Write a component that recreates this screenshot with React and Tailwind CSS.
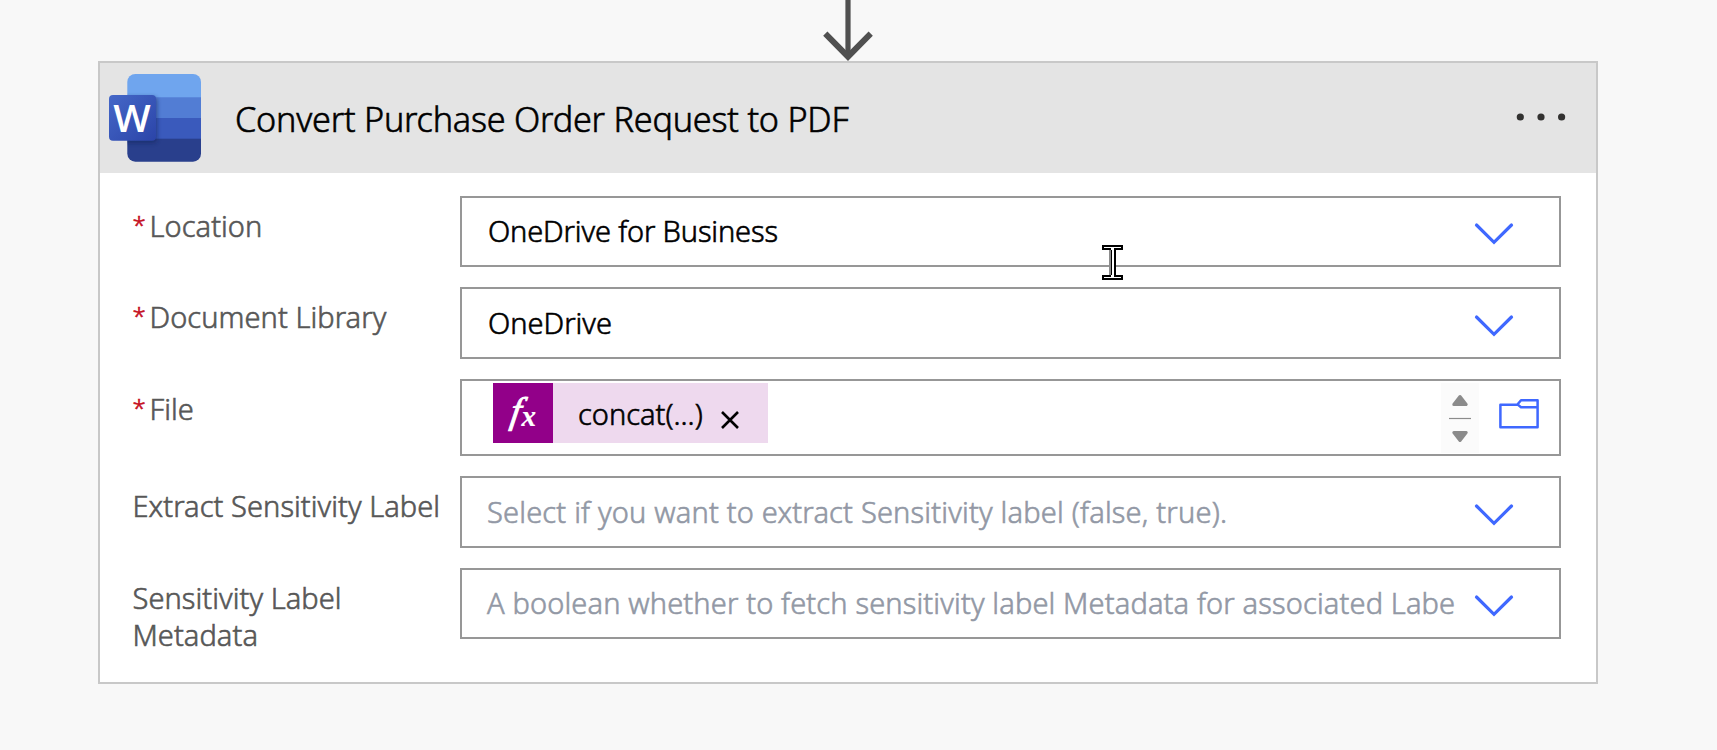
function Chevron() {
  return (
    <svg className="h-[24px] w-[40px] shrink-0" viewBox="0 0 40 24" fill="none" stroke="#3f68ff" strokeWidth="3.2" strokeLinecap="round">
      <path d="M2.500 3L20 20.300L37.500 3" />
    </svg>
  );
}

function FolderIcon() {
  return (
    <svg className="h-[30px] w-[40px] shrink-0" viewBox="0 0 40 30" fill="none" stroke="#3f68ff" strokeWidth="2.500" strokeLinejoin="round">
      <path d="M38.600 8.300V28.300H1.400V5.800H18.200L22 1.300H38.600V8.300H22L18.800 5.600" />
    </svg>
  );
}

function Scroller() {
  return (
    <svg className="h-[70px] w-[38px] shrink-0 bg-[#fbfbfb]" viewBox="0 0 38 70" fill="#8b8b8b" stroke="#8b8b8b" strokeWidth="3" strokeLinejoin="round">
      <path d="M19 13.500L25.200 21.500H12.800Z" />
      <path d="M8 35.500H30" strokeWidth="1.200" />
      <path d="M19 57.500L25.200 49.500H12.800Z" />
    </svg>
  );
}

function WordIcon() {
  return (
    <svg className="h-[92px] w-[96px] shrink-0" viewBox="0 0 96 92">
      <defs>
        <linearGradient id="wordTile" x1="0" y1="0" x2="1" y2="1">
          <stop offset="0" stopColor="#4568c8" />
          <stop offset="1" stopColor="#2b44a8" />
        </linearGradient>
        <clipPath id="wordPage"><rect x="21.300" y="2" width="73.700" height="87.700" rx="8" /></clipPath>
        <filter id="wordShadow" x="-20%" y="-20%" width="150%" height="150%"><feGaussianBlur stdDeviation="2" /></filter>
      </defs>
      <g clipPath="url(#wordPage)">
        <rect x="21" y="2" width="74" height="24" fill="#6fa5ee" />
        <rect x="21" y="25.300" width="74" height="21" fill="#527dd4" />
        <rect x="21" y="46" width="74" height="21" fill="#3a5abc" />
        <rect x="21" y="66.700" width="74" height="24" fill="#293f8c" />
        <rect x="4" y="25" width="47" height="46" rx="4" fill="#16265e" opacity="0.6" filter="url(#wordShadow)" />
      </g>
      <rect x="3" y="23" width="47" height="45.700" rx="4" fill="url(#wordTile)" />
      <text x="26" y="59.500" textAnchor="middle" textLength="37.500" lengthAdjust="spacingAndGlyphs" fill="#fff" className="font-['Open_Sans',sans-serif] text-[38px] font-semibold">W</text>
    </svg>
  );
}

function FxIcon() {
  return (
    <svg className="h-[60px] w-[60px] shrink-0 bg-[#920089] font-['Liberation_Serif',serif] italic" viewBox="0 0 60 60" fill="#fff" stroke="#fff">
      <text x="22.500" y="40" transform="skewX(-9)" strokeWidth="0.900" className="text-[37px]">f</text>
      <text x="28.500" y="42.500" strokeWidth="0.200" className="text-[29px] font-bold">x</text>
    </svg>
  );
}

function IBeam() {
  return (
    <svg className="absolute top-[244px] left-[1101px] h-[37px] w-[23px]" viewBox="0 0 23 37">
      <path d="M2 2H21V5H14V32H21V35H2V32H9V5H2Z" fill="#fff" stroke="#000" strokeWidth="2" />
      <path d="M9 6V31" stroke="#8c8c8c" strokeWidth="2" />
      <path d="M10.500 6V31" stroke="#000" strokeWidth="1" />
    </svg>
  );
}

function Row({ label, required, children }) {
  return (
    <div className="flex items-start">
      <div className="flex w-[328px] shrink-0 pt-[11px] leading-[37px] tracking-[0.06px] text-[#575757]">
        {required && <span className="w-[17px] shrink-0 pl-[0.5px] text-[24px] leading-[35px] text-[#c50f1f]">*</span>}
        <span className="pl-[0.5px] whitespace-nowrap">{label}</span>
      </div>
      {children}
    </div>
  );
}

function Select({ value, placeholder, textClass = "", height = "h-[71px]" }) {
  return (
    <div className={"flex w-[1101px] items-center border-2 border-[#979797] bg-white pr-[45px] " + height}>
      <span className={"w-[990px] shrink-0 whitespace-nowrap " + (value ? "pl-[26px] text-black " : "pl-[25px] text-[#9298a5] ") + textClass}>
        {value || placeholder}
      </span>
      <div className="ml-auto pt-[5px]"><Chevron /></div>
    </div>
  );
}

export default function App() {
  return (
    <div className="relative flex h-[750px] w-[1717px] flex-col overflow-hidden bg-[#f8f8f8] pl-[98px] font-['Noto_Sans',sans-serif] text-[29px] font-light [-webkit-text-stroke:0.6px]">
      <div className="flex h-[61px] w-[1500px] justify-center">
        <svg className="h-[61px] w-[52px]" viewBox="0 0 52 61" fill="none" stroke="#505050">
          <path d="M26 0V56" strokeWidth="5.200" />
          <path d="M3.300 33.700L26 56.700L48.700 33.700" strokeWidth="6" />
        </svg>
      </div>
      <div className="flex h-[623px] w-[1500px] flex-col border-2 border-[#c8c8c8] bg-white">
        <div className="flex h-[110px] shrink-0 items-center bg-[#e4e4e4] pr-[30px] pl-[6px]">
          <WordIcon />
          <h1 className="ml-[33px] pt-[2px] text-[34.2px] tracking-[-0.22px] whitespace-nowrap text-black">Convert Purchase Order Request to PDF</h1>
          <svg className="mb-[2px] ml-auto h-[8px] w-[50px]" viewBox="0 0 50 8" fill="#323130">
            <circle cx="4.300" cy="4" r="3.600" /><circle cx="25" cy="4" r="3.600" /><circle cx="45.600" cy="4" r="3.600" />
          </svg>
        </div>
        <div className="flex flex-col gap-5 pt-[23px] pl-[32px]">
          <Row label="Location" required>
            <Select value="OneDrive for Business" textClass="pb-[2px] tracking-[-0.15px]" />
          </Row>
          <Row label="Document Library" required>
            <Select value="OneDrive" height="h-[72px]" />
          </Row>
          <Row label="File" required>
            <div className="flex h-[77px] w-[1101px] items-start border-2 border-[#979797] bg-white pt-[2px] pr-[20px] pl-[31px]">
              <div className="flex h-[60px] w-[275px] bg-[#eed9ee]">
                <FxIcon />
                <span className="pl-[25px] leading-[62px] text-black">concat(...)</span>
                <svg className="mt-[27px] ml-[17px] h-[20px] w-[20px]" viewBox="0 0 20 20" stroke="#000" strokeWidth="2.600"><path d="M2 2L18 18M18 2L2 18" /></svg>
              </div>
              <div className="ml-auto flex gap-5">
                <Scroller />
                <div className="pt-[16px]"><FolderIcon /></div>
              </div>
            </div>
          </Row>
          <Row label="Extract Sensitivity Label">
            <Select placeholder="Select if you want to extract Sensitivity label (false, true)." height="h-[72px]" textClass="tracking-[0.19px]" />
          </Row>
          <Row label={<>Sensitivity Label<br />Metadata</>}>
            <Select placeholder="A boolean whether to fetch sensitivity label Metadata for associated Labe" textClass="pb-[1px] tracking-[0.14px]" />
          </Row>
        </div>
      </div>
      <IBeam />
    </div>
  );
}
